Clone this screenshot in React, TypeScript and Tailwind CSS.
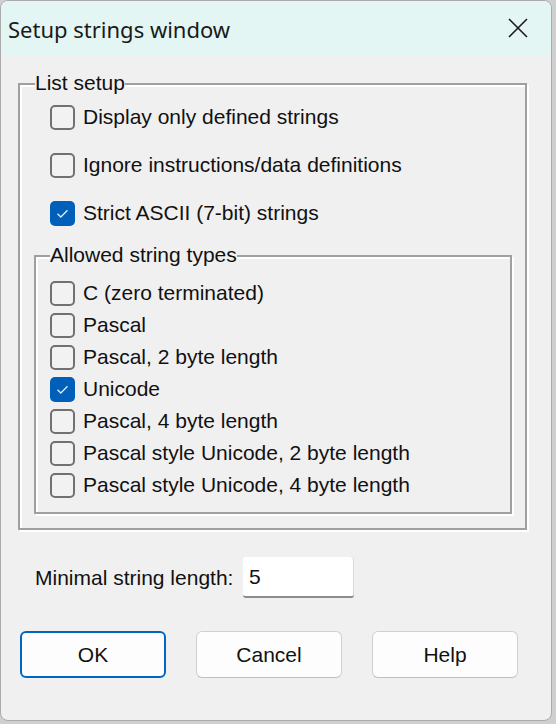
import { useState } from 'react';

const listOptions = [
  { label: 'Display only defined strings', checked: false },
  { label: 'Ignore instructions/data definitions', checked: false },
  { label: 'Strict ASCII (7-bit) strings', checked: true },
];

const stringTypes = [
  { label: 'C (zero terminated)', checked: false },
  { label: 'Pascal', checked: false },
  { label: 'Pascal, 2 byte length', checked: false },
  { label: 'Unicode', checked: true },
  { label: 'Pascal, 4 byte length', checked: false },
  { label: 'Pascal style Unicode, 2 byte length', checked: false },
  { label: 'Pascal style Unicode, 4 byte length', checked: false },
];

function CheckBox({ checked }: { checked: boolean }) {
  if (checked) {
    return (
      <span className="w-[25px] h-[25px] shrink-0 rounded-[5px] bg-[#005fb8] flex items-center justify-center">
        <svg width="25" height="25" viewBox="0 0 25 25" fill="none">
          <path d="M7.5 12.8 L10.8 16 L17.5 9.2" stroke="#dbe9f7" strokeWidth="1.4" />
        </svg>
      </span>
    );
  }
  return <span className="w-[25px] h-[25px] shrink-0 rounded-[5px] border-2 border-[#717171] bg-[#f2f2f2]" />;
}

function CheckRow({ label, initial, h }: { label: string; initial: boolean; h: string }) {
  const [on, setOn] = useState(initial);
  return (
    <div className={`flex items-center gap-[8px] cursor-default ${h}`} onClick={() => setOn(!on)}>
      <CheckBox checked={on} />
      <span className="leading-[24px] text-[21px] text-[#111] whitespace-nowrap">{label}</span>
    </div>
  );
}

function GroupBox({
  title,
  className,
  legendX,
  children,
}: {
  title: string;
  className: string;
  legendX: string;
  children: React.ReactNode;
}) {
  return (
    <div
      className={`relative border-2 border-[#a0a0a0] shadow-[inset_2px_2px_0_#ffffff,2px_2px_0_#ffffff] ${className}`}
    >
      <span
        className={`absolute top-[-14px] ${legendX} bg-[#f0f0f0] text-[21px] leading-[24px] text-[#111] whitespace-nowrap`}
      >
        {title}
      </span>
      {children}
    </div>
  );
}

export default function App() {
  return (
    <div className="w-[556px] h-[724px] bg-[#cfcfcf] overflow-hidden" style={{ fontFamily: '"Liberation Sans", Arial, sans-serif' }}>
      <div className="w-[552px] h-[721px] flex flex-col rounded-[8px] border border-[#ababab] overflow-hidden bg-[#f0f0f0]">
        {/* title bar */}
        <div className="h-[54px] shrink-0 bg-[#e3f6f4] flex items-center justify-between pl-[7px] pr-[23px]">
          <span
            className="text-[22px] text-[#1a1a1a] pt-[3px]"
            style={{ fontFamily: '"Noto Sans", "Open Sans", sans-serif' }}
          >
            Setup strings window
          </span>
          <svg width="20" height="20" viewBox="0 0 20 20">
            <path d="M1 1 L19 19 M19 1 L1 19" stroke="#1a1a1a" strokeWidth="1.6" />
          </svg>
        </div>

        {/* body */}
        <div className="flex-1 flex flex-col">
          <GroupBox title="List setup" className="mt-[28px] ml-[17px] w-[509px] h-[447px] pl-[14px]" legendX="left-[15px]">
            <div className="pt-[8px] pl-[16px] flex flex-col">
              {listOptions.map((o) => (
                <CheckRow key={o.label} label={o.label} initial={o.checked} h="h-[48px]" />
              ))}
            </div>
            <GroupBox title="Allowed string types" className="mt-[18px] w-[478px] h-[259px]" legendX="left-[14px]">
              <div className="pt-[20px] pl-[14px] flex flex-col">
                {stringTypes.map((o) => (
                  <CheckRow key={o.label} label={o.label} initial={o.checked} h="h-[32px]" />
                ))}
              </div>
            </GroupBox>
          </GroupBox>

          <div className="mt-[27px] pl-[34px] flex items-center">
            <span className="w-[208px] text-[21px] leading-[24px] text-[#111] whitespace-nowrap">Minimal string length:</span>
            <div className="w-[111px] h-[41px] bg-white rounded-[3px] border-b-2 border-[#8c8c8c] shadow-[inset_-1px_0_0_#d9d9d9] flex items-center pl-[6px] text-[21px] text-[#111]">
              5
            </div>
          </div>

          <div className="mt-[33px] pl-[19px] flex gap-[30px]">
            <button className="w-[146px] h-[47px] rounded-[6px] border-2 border-[#0067c0] bg-[#fdfdfd] text-[21px] text-[#111]">
              OK
            </button>
            <button className="w-[146px] h-[47px] rounded-[6px] border border-[#d0d0d0] border-b-[#c0c0c0] bg-[#fdfdfd] text-[21px] text-[#111]">
              Cancel
            </button>
            <button className="w-[146px] h-[47px] rounded-[6px] border border-[#d0d0d0] border-b-[#c0c0c0] bg-[#fdfdfd] text-[21px] text-[#111]">
              Help
            </button>
          </div>
        </div>
      </div>
    </div>
  );
}
